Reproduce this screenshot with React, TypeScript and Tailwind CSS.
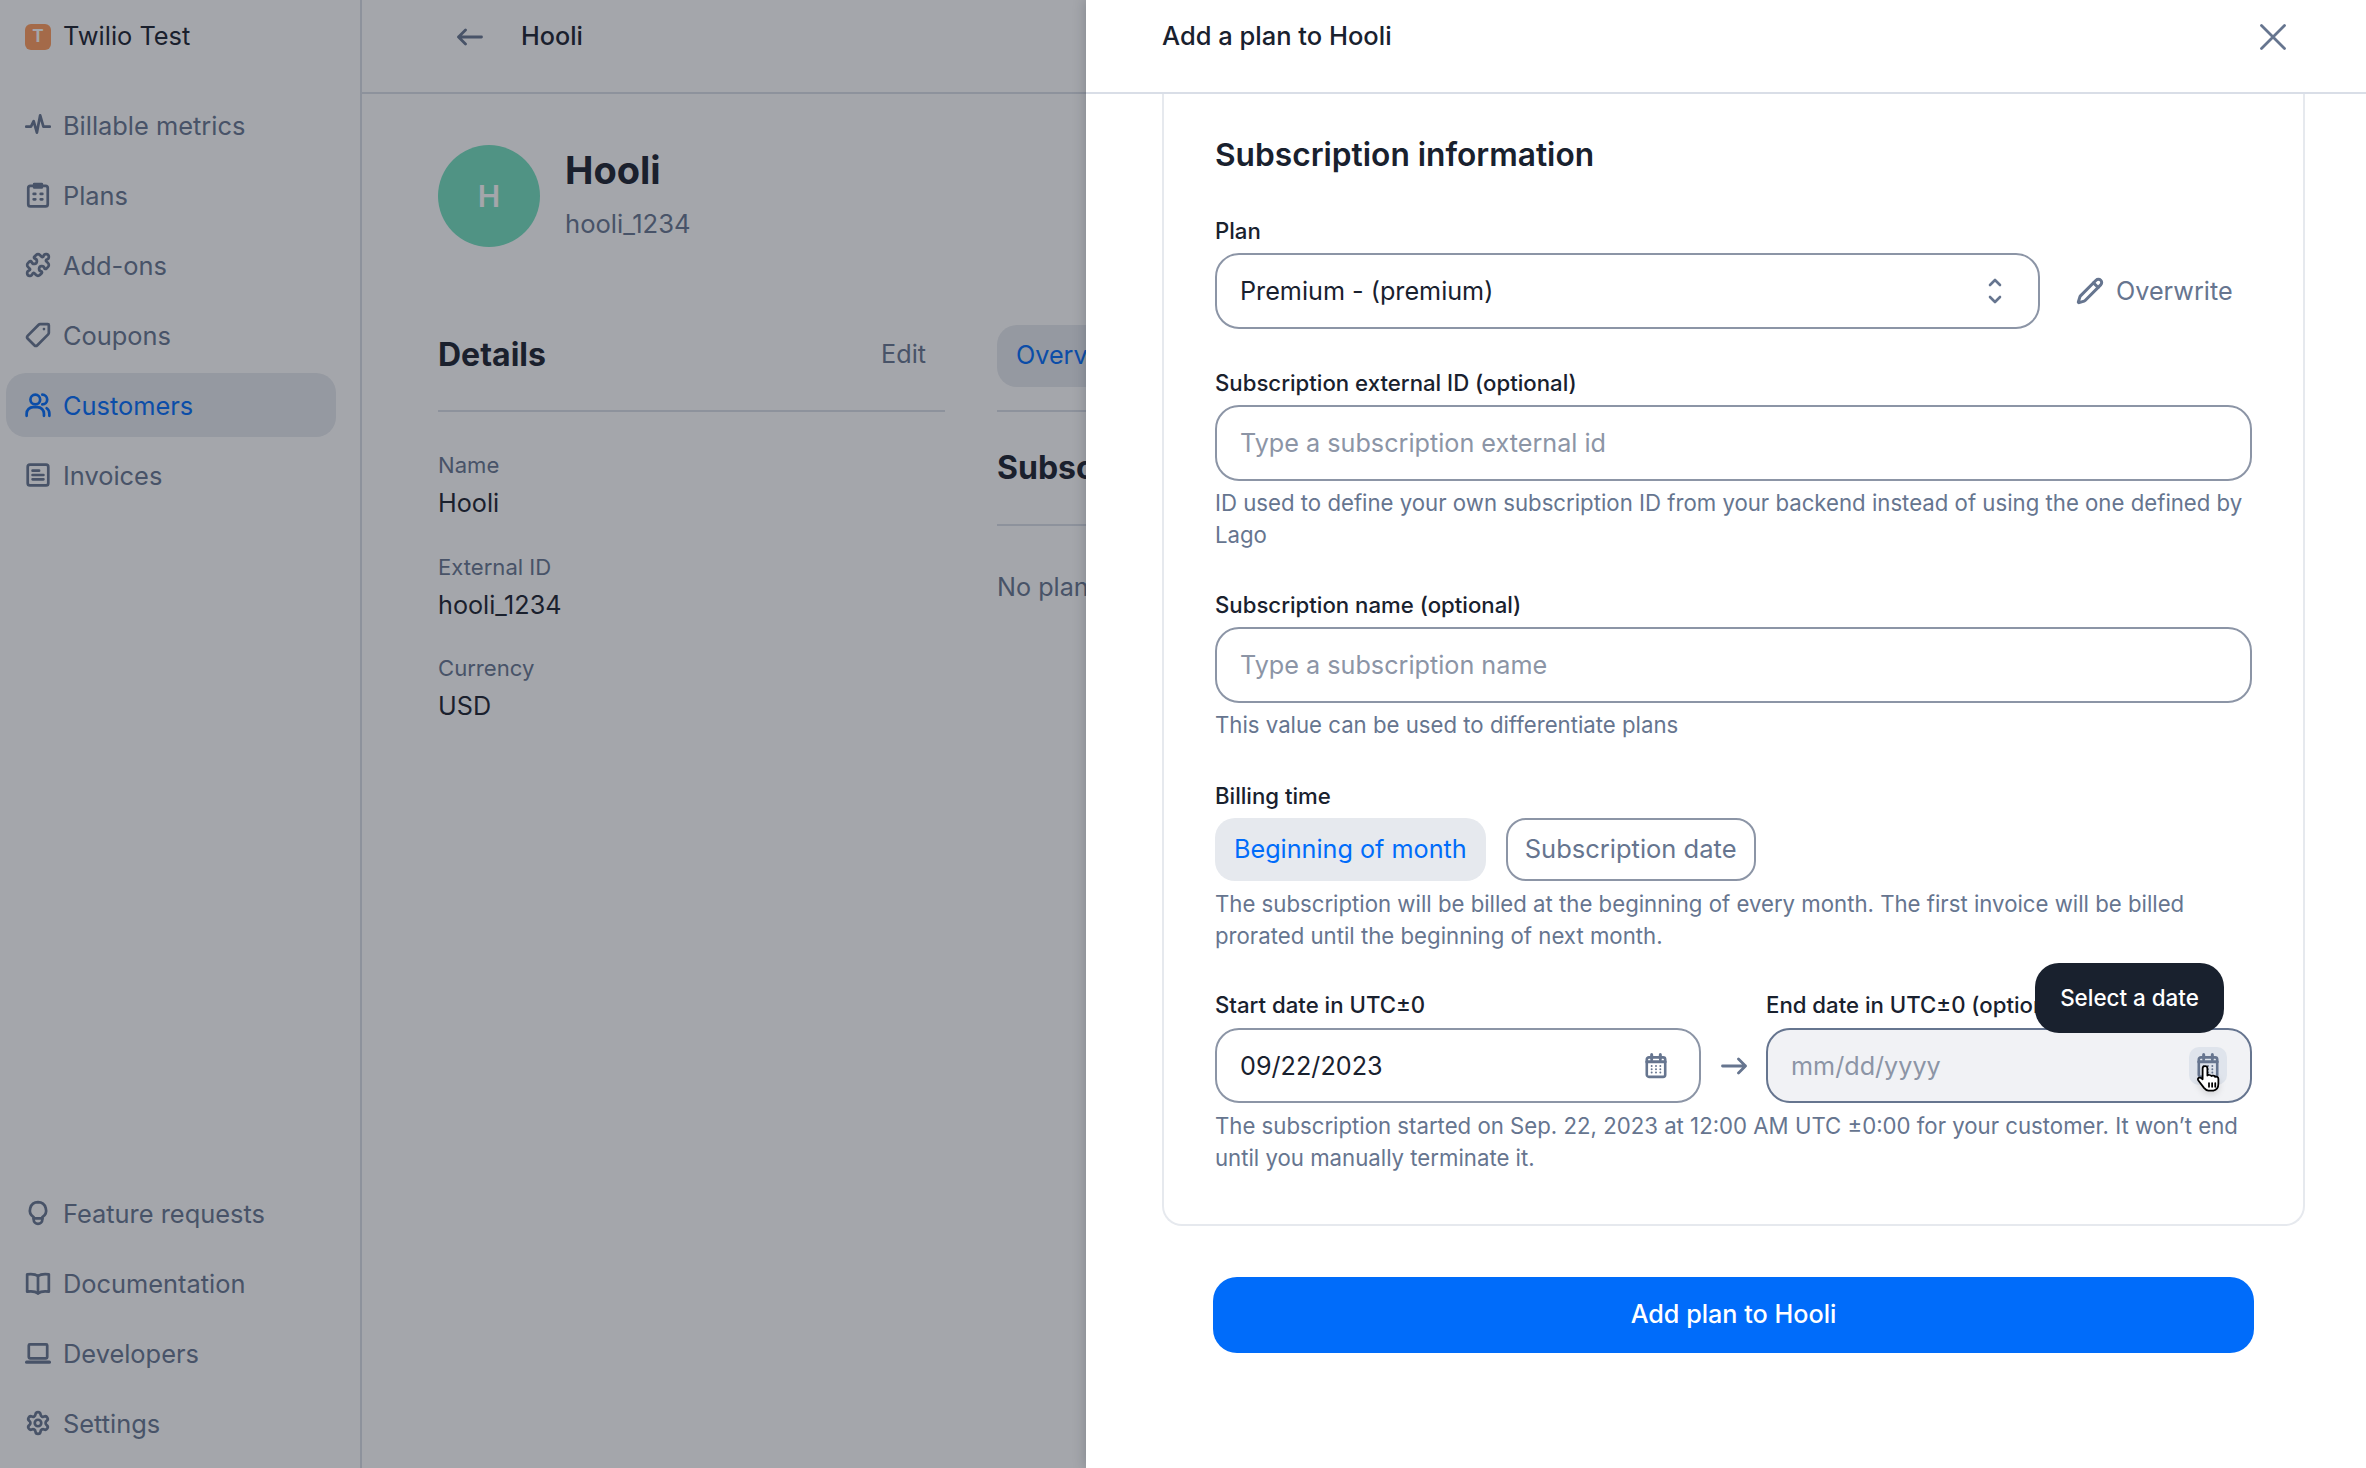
import { Pencil, Puzzle, Settings } from 'lucide-react';
import type { ReactNode } from 'react';

const Icon = ({ children, size = 26 }: { children: ReactNode; size?: number }) => (
  <svg
    width={size}
    height={size}
    viewBox="0 0 24 24"
    fill="none"
    stroke="currentColor"
    strokeWidth={2.5}
    strokeLinecap="round"
    strokeLinejoin="round"
    className="shrink-0"
  >
    {children}
  </svg>
);

const Calendar = () => (
  <Icon>
    <rect x="3.5" y="4" width="17" height="18" rx="2" strokeWidth={2.4} />
    <path d="M8 1.5v4M16 1.5v4M3.5 8h17" strokeWidth={2.8} />
    <path
      d="M8 12h.01M12 12h.01M16 12h.01M8 15h.01M12 15h.01M16 15h.01M8 18h.01M12 18h.01M16 18h.01"
      strokeWidth={1.8}
    />
  </Icon>
);

const Arrow = ({ flip = false }: { flip?: boolean }) => (
  <svg
    width="26"
    height="26"
    viewBox="0 0 26 26"
    fill="none"
    stroke="#66758f"
    strokeWidth="2.8"
    strokeLinecap="round"
    strokeLinejoin="round"
    className={`shrink-0 ${flip ? 'rotate-180' : ''}`}
  >
    <path d="M1.5 13h23M8.5 6l-7 7 7 7" />
  </svg>
);

const topNav = [
  {
    name: 'Billable metrics',
    icon: (
      <Icon>
        <path d="M1 13.5h4.5l2.5-5 3 10.5 3-16 3 10.5h6" />
      </Icon>
    ),
  },
  {
    name: 'Plans',
    icon: (
      <Icon>
        <rect x="3" y="3.5" width="18" height="19" rx="2" />
        <path d="M8.5 2h7v3h-7z" />
        <path d="M8 11h1.5M14.5 11H16M8 16h1.5M14.5 16H16" />
      </Icon>
    ),
  },
  { name: 'Add-ons', icon: <Puzzle size={26} strokeWidth={2.5} className="shrink-0" /> },
  {
    name: 'Coupons',
    icon: (
      <Icon>
        <path d="M14 2h7a1 1 0 0 1 1 1v7a2 2 0 0 1-.6 1.4L11.4 21.4a2 2 0 0 1-2.8 0l-6-6a2 2 0 0 1 0-2.8L12.6 2.6A2 2 0 0 1 14 2z" />
        <path d="M17.5 6.5h.01" />
      </Icon>
    ),
  },
  {
    name: 'Customers',
    active: true,
    icon: (
      <Icon>
        <circle cx="9.5" cy="7" r="4.5" />
        <path d="M1.5 22v-2a6 6 0 0 1 6-6h4a6 6 0 0 1 6 6v2" />
        <path d="M16 2.5a4.5 4.5 0 0 1 0 9M22.5 22v-2a6 6 0 0 0-2.5-5" />
      </Icon>
    ),
  },
  {
    name: 'Invoices',
    icon: (
      <Icon>
        <rect x="2.5" y="2.5" width="19" height="19" rx="2" />
        <path d="M7 8h6M7 12h10M7 16h10" />
      </Icon>
    ),
  },
];

const bottomNav = [
  {
    name: 'Feature requests',
    icon: (
      <Icon>
        <path d="M12 2a7.5 7.5 0 0 0-4 13.8V18a4 4 0 0 0 8 0v-2.2A7.5 7.5 0 0 0 12 2z" />
        <path d="M8 17h8" />
      </Icon>
    ),
  },
  {
    name: 'Documentation',
    icon: (
      <Icon>
        <path d="M12 5.5C10 4 6 3.5 2 4v16c4-.5 8 0 10 1.5 2-1.5 6-2 10-1.5V4c-4-.5-8 0-10 1.5z" />
        <path d="M12 5.5v16" />
      </Icon>
    ),
  },
  {
    name: 'Developers',
    icon: (
      <Icon>
        <rect x="3.5" y="4" width="17" height="13" rx="1" />
        <path d="M1.5 20.5h21" strokeWidth={3} />
      </Icon>
    ),
  },
  { name: 'Settings', icon: <Settings size={26} strokeWidth={2.5} className="shrink-0" /> },
];

const NavItem = ({ item }: { item: { name: string; icon: ReactNode; active?: boolean } }) => (
  <div
    className={`flex items-center gap-[12px] h-[64px] pl-[19px] rounded-[20px] text-[25.4px] ${
      item.active ? 'bg-[#e6e9ee] text-[#006cfa]' : 'text-[#66758f]'
    }`}
  >
    {item.icon}
    <span className="pt-[2px]">{item.name}</span>
  </div>
);

const Label = ({ children }: { children: ReactNode }) => (
  <div className="h-[32px] leading-[32px] text-[22.2px] font-medium text-[#19212e] whitespace-nowrap">{children}</div>
);

const Help = ({ children, className = '' }: { children: ReactNode; className?: string }) => (
  <p className={`text-[22.2px] leading-[32px] text-[#66758f] ${className}`}>{children}</p>
);

const TextBox = ({ placeholder }: { placeholder: string }) => (
  <div className="mt-[6px] flex items-center h-[76px] px-[23px] pt-[2px] rounded-[24px] border-2 border-[#8c95a6] text-[25.2px] text-[#8c95a6]">
    {placeholder}
  </div>
);

export default function App() {
  return (
    <div
      className="relative w-[2366px] h-[1468px] overflow-hidden bg-white text-[#19212e]"
      style={{ fontFamily: 'Inter, "Liberation Sans", sans-serif' }}
    >
      <div className="flex h-full">
        {/* sidebar */}
        <aside className="flex flex-col w-[362px] shrink-0 h-full border-r-2 border-[#d9dee7] pl-[6px] pr-[24px] pb-[13px]">
          <div className="flex items-center gap-[12px] h-[73px] pl-[19px] text-[25.4px] text-[#19212e]">
            <div className="flex items-center justify-center w-[26px] h-[26px] rounded-[6px] bg-[#ff9c5c] text-[17px] font-bold text-white">
              T
            </div>
            Twilio Test
          </div>
          <nav className="mt-[20px] flex flex-col gap-[6px]">
            {topNav.map((item) => (
              <NavItem key={item.name} item={item} />
            ))}
          </nav>
          <nav className="mt-auto flex flex-col gap-[6px]">
            {bottomNav.map((item) => (
              <NavItem key={item.name} item={item} />
            ))}
          </nav>
        </aside>

        {/* customer page behind the drawer */}
        <main className="flex-1 min-w-0">
          <header className="flex items-center h-[94px] border-b-2 border-[#d9dee7] pl-[95px] pb-[19px] text-[25.2px]">
            <Arrow />
            <span className="ml-[38px] font-medium">Hooli</span>
          </header>
          <div className="px-[76px]">
            <div className="flex items-center gap-[25px] mt-[51px] h-[102px]">
              <div className="flex items-center justify-center w-[102px] h-[102px] rounded-full bg-[#73dfbe] text-[30px] font-semibold text-white">
                H
              </div>
              <div className="-mt-[5px]">
                <div className="text-[38px] leading-[48px] font-bold">Hooli</div>
                <div className="mt-[12px] text-[25.6px] leading-[36px] text-[#66758f]">hooli_1234</div>
              </div>
            </div>
            <div className="flex gap-[52px] mt-[78px]">
              <section className="w-[507px] shrink-0">
                <div className="flex items-center justify-between h-[87px] pb-[25px] pr-[19px] border-b-2 border-[#d9dee7]">
                  <h2 className="text-[32px] font-bold">Details</h2>
                  <span className="text-[25.2px] text-[#66758f]">Edit</span>
                </div>
                <div className="flex flex-col gap-[31.5px] pt-[37px]">
                  {[
                    ['Name', 'Hooli'],
                    ['External ID', 'hooli_1234'],
                    ['Currency', 'USD'],
                  ].map(([label, value]) => (
                    <div key={label} className="flex flex-col gap-[6px]">
                      <div className="text-[22.1px] leading-[32px] text-[#66758f]">{label}</div>
                      <div className="text-[25.2px] leading-[32px]">{value}</div>
                    </div>
                  ))}
                </div>
              </section>
              <section className="w-[800px] shrink-0">
                <div className="h-[87px] border-b-2 border-[#d9dee7]">
                  <div className="inline-flex items-center h-[62px] px-[19px] rounded-[20px] bg-[#e6e9ee] text-[25.2px] text-[#006cfa]">
                    Overview
                  </div>
                </div>
                <h2 className="flex items-center h-[114px] border-b-2 border-[#d9dee7] text-[32px] font-bold">
                  Subscriptions
                </h2>
                <p className="mt-[43px] text-[25.2px] text-[#66758f]">No plans yet</p>
              </section>
            </div>
          </div>
        </main>
      </div>

      {/* dim layer */}
      <div className="absolute inset-0 bg-[#1c212c]/40" />

      {/* drawer */}
      <div className="absolute top-0 right-0 w-[1280px] h-full flex flex-col bg-white shadow-[0_0_12px_rgba(25,33,46,0.25)]">
        <div className="flex items-center justify-between shrink-0 h-[94px] border-b-2 border-[#d9dee7] pl-[76px] pr-[80px] pb-[19px]">
          <span className="text-[25.5px] font-medium">Add a plan to Hooli</span>
          <svg width="26" height="26" viewBox="0 0 26 26" fill="none" stroke="#66758f" strokeWidth="2.8" strokeLinecap="round">
            <path d="M1.5 1.5l23 23M24.5 1.5l-23 23" />
          </svg>
        </div>
        <div className="pl-[76px]">
          <div className="w-[1143px] border-2 border-t-0 border-[#e6e9ee] rounded-b-[20px] px-[51px] pt-[39px] pb-[50px]">
            <h3 className="text-[31.7px] leading-[44px] font-semibold">Subscription information</h3>

            <div className="mt-[38px]">
              <Label>Plan</Label>
              <div className="mt-[6px] flex items-center gap-[36px]">
                <div className="flex-1 flex items-center justify-between h-[76px] pl-[23px] pr-[35px] rounded-[24px] border-2 border-[#8c95a6] text-[25.2px]">
                  <span className="pt-[2px]">Premium - (premium)</span>
                  <svg width="16" height="28" viewBox="0 0 16 28" fill="none" stroke="#66758f" strokeWidth="2.6" strokeLinecap="round" strokeLinejoin="round">
                    <path d="M3 8l5-5 5 5M3 20l5 5 5-5" />
                  </svg>
                </div>
                <div className="flex items-center gap-[12px] w-[176px] text-[25.2px] text-[#66758f]">
                  <Pencil size={28} strokeWidth={2.6} className="shrink-0" />
                  <span className="pt-[2px]">Overwrite</span>
                </div>
              </div>
            </div>

            <div className="mt-[38px]">
              <Label>Subscription external ID (optional)</Label>
              <TextBox placeholder="Type a subscription external id" />
              <Help className="mt-[6px]">
                ID used to define your own subscription ID from your backend instead of using the one defined by Lago
              </Help>
            </div>

            <div className="mt-[38px]">
              <Label>Subscription name (optional)</Label>
              <TextBox placeholder="Type a subscription name" />
              <Help className="mt-[6px]">This value can be used to differentiate plans</Help>
            </div>

            <div className="mt-[39px]">
              <Label>Billing time</Label>
              <div className="mt-[6px] flex gap-[20px]">
                <div className="flex items-center h-[63px] px-[19px] rounded-[20px] bg-[#e6e9ee] text-[25.2px] text-[#006cfa]">
                  Beginning of month
                </div>
                <div className="flex items-center h-[63px] px-[17px] rounded-[20px] border-2 border-[#8c95a6] text-[25.5px] text-[#66758f]">
                  Subscription date
                </div>
              </div>
              <Help className="mt-[7px]">
                The subscription will be billed at the beginning of every month. The first invoice will be billed prorated until the beginning of next month.
              </Help>
            </div>

            <div className="mt-[37px]">
              <div className="flex">
                <div className="w-[486px] shrink-0">
                  <Label>Start date in UTC±0</Label>
                  <div className="mt-[7px] flex items-center justify-between h-[75px] pl-[23px] pr-[30px] rounded-[24px] border-2 border-[#8c95a6] text-[25.2px]">
                    <span className="pt-[2px]">09/22/2023</span>
                    <span className="text-[#66758f]">
                      <Calendar />
                    </span>
                  </div>
                </div>
                <div className="flex items-center justify-center w-[65px] pt-[39px]">
                  <Arrow flip />
                </div>
                <div className="relative w-[486px] shrink-0">
                  <Label>End date in UTC±0 (optional)</Label>
                  <div className="mt-[7px] flex items-center justify-between h-[75px] pl-[23px] pr-[23px] rounded-[24px] border-2 border-[#66758f] bg-[#f1f2f5] text-[25.2px] text-[#8c95a6]">
                    <span className="pt-[2px]">mm/dd/yyyy</span>
                    <span className="relative flex items-center justify-center w-[38px] h-[38px] rounded-[10px] bg-[#dfe4ec] text-[#66758f]">
                      <Calendar />
                      <svg width="30" height="30" viewBox="0 0 24 24" className="absolute left-[5px] top-[16px] drop-shadow-md" fill="#fff" stroke="#000" strokeWidth="1.4" strokeLinejoin="round" strokeLinecap="round">
                        <path d="M9 2.5c1 0 1.7.8 1.7 1.8V10c.5-.6 2.8-.6 3.2.4.6-.5 2.6-.4 3 .7.9-.4 2.6 0 2.6 1.5v4c0 2.8-1.5 5-4 5.5h-4c-1.5 0-2.5-1-3.5-2.2L3.5 14c-.8-1-.3-2.2.8-2.3.8-.1 1.5.3 2.6 1.3V4.3c0-1 .9-1.8 2.1-1.8z" />
                        <path d="M12 16v3M14.5 16v3M17 16v3" />
                      </svg>
                    </span>
                  </div>
                  <div className="absolute left-[269px] top-[-26px] flex items-center justify-center w-[189px] h-[70px] rounded-[24px] bg-[#19212e] text-[22.4px] font-medium text-white">
                    Select a date
                  </div>
                </div>
              </div>
              <Help className="mt-[7px]">
                The subscription started on Sep. 22, 2023 at 12:00 AM UTC ±0:00 for your customer. It won’t end until you manually terminate it.
              </Help>
            </div>
          </div>
          <button className="mt-[51px] ml-[51px] flex items-center justify-center w-[1041px] h-[76px] rounded-[24px] bg-[#006cfa] text-[25.2px] font-medium text-white">
            Add plan to Hooli
          </button>
        </div>
      </div>
    </div>
  );
}
